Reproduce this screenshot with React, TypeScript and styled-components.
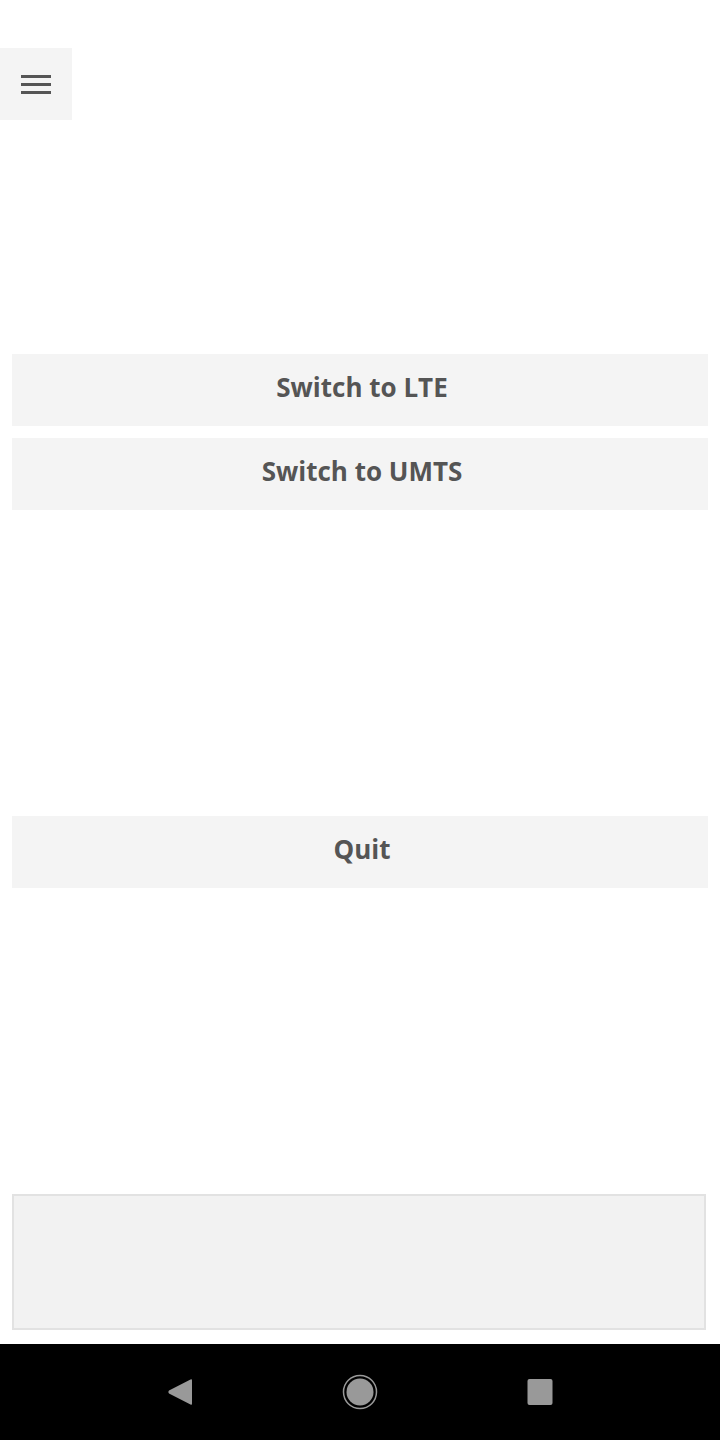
import React, { ReactElement } from 'react';
import styled, { createGlobalStyle } from 'styled-components';

const GlobalStyle = createGlobalStyle`
    html, body {
        margin: 0;
        padding: 0;
        background: #fff;
        font-family: "Open Sans", "Liberation Sans", sans-serif;
    }
`;

const Screen = styled.div`
    width: 720px;
    height: 1440px;
    display: flex;
    flex-direction: column;
    overflow: hidden;
`;

const Content = styled.main`
    flex: 1;
    display: flex;
    flex-direction: column;
    padding: 48px 12px 0 12px;
`;

const MenuButton = styled.button`
    width: 72px;
    height: 72px;
    margin-left: -12px;
    border: none;
    background: #f4f4f4;
    display: flex;
    flex-direction: column;
    justify-content: center;
    align-items: center;
    gap: 5px;
    padding: 0;
`;

const MenuBar = styled.span`
    display: block;
    width: 30px;
    height: 3px;
    background: #555;
`;

const ActionGroup = styled.div<{ $top: number }>`
    display: flex;
    flex-direction: column;
    gap: 12px;
    margin-top: ${p => p.$top}px;
`;

const ActionButton = styled.button`
    height: 72px;
    width: 100%;
    border: none;
    background: #f4f4f4;
    color: #555;
    font-family: "Open Sans", "Liberation Sans", sans-serif;
    font-weight: 700;
    font-size: 26px;
    padding: 0 0 6px 4px;
`;

const Output = styled.div`
    margin: 306px 2px 0 0;
    height: 136px;
    box-sizing: border-box;
    border: 2px solid #e2e2e2;
    background: #f2f2f2;
`;

const NavBar = styled.nav`
    height: 96px;
    margin-top: 14px;
    background: #000;
    display: flex;
    justify-content: center;
    align-items: center;
    gap: 144px;
`;

const NavIcon = styled.svg`
    display: block;
`;

export default function App(): ReactElement {
    return (
        <Screen>
            <GlobalStyle />
            <Content>
                <MenuButton aria-label="Menu">
                    <MenuBar />
                    <MenuBar />
                    <MenuBar />
                </MenuButton>
                <ActionGroup $top={234}>
                    <ActionButton>Switch to LTE</ActionButton>
                    <ActionButton>Switch to UMTS</ActionButton>
                </ActionGroup>
                <ActionGroup $top={306}>
                    <ActionButton>Quit</ActionButton>
                </ActionGroup>
                <Output />
            </Content>
            <NavBar>
                <NavIcon width="36" height="36" viewBox="0 0 36 36">
                    <path d="M30 6.5 L30 29.5 Q30 31.5 28.5 30.5 L7 19.5 Q5.5 18 7 16.5 L28.5 5.5 Q30 4.5 30 6.5 Z" fill="#999" />
                </NavIcon>
                <NavIcon width="36" height="36" viewBox="0 0 36 36">
                    <circle cx="18" cy="18" r="16.5" fill="none" stroke="#999" strokeWidth="1.5" />
                    <circle cx="18" cy="18" r="13.5" fill="#999" />
                </NavIcon>
                <NavIcon width="36" height="36" viewBox="0 0 36 36">
                    <rect x="5.5" y="5" width="25" height="26" rx="2" fill="#999" />
                </NavIcon>
            </NavBar>
        </Screen>
    );
}
